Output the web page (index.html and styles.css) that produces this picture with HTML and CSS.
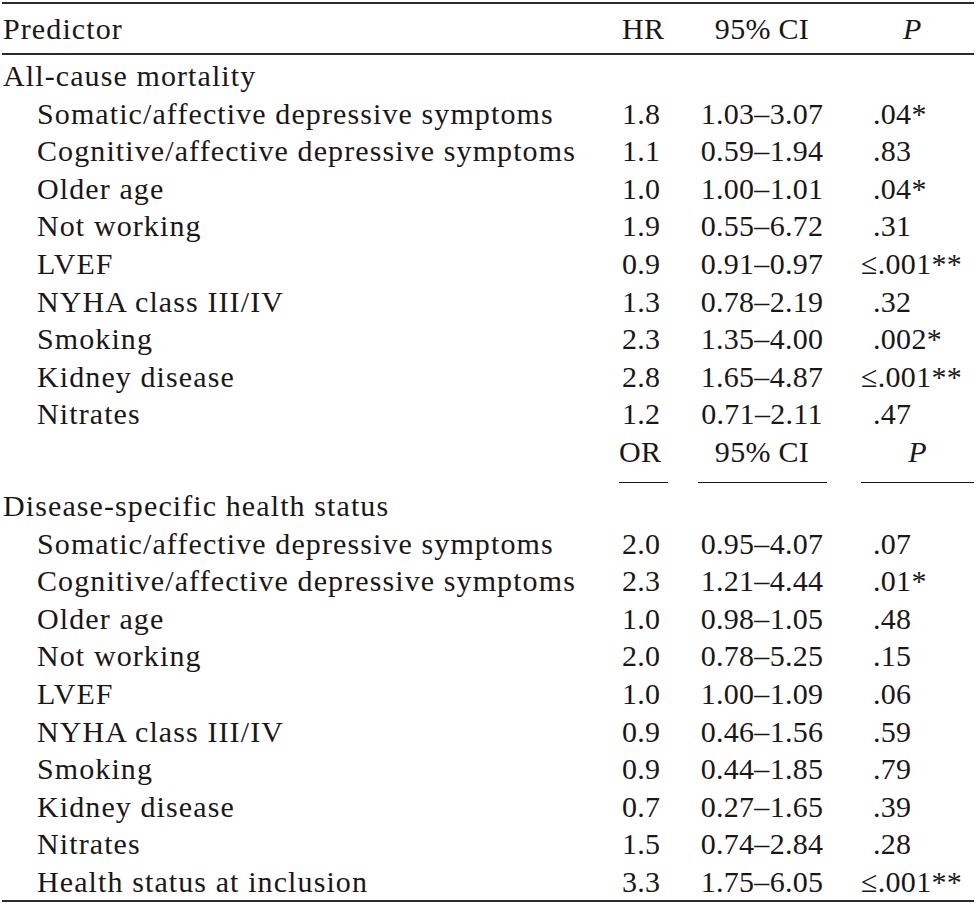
FILE: index.html
```html
<!DOCTYPE html>
<html>
<head>
<meta charset="utf-8">
<link rel="stylesheet" href="styles.css">
</head>
<body>
<table class="tbl">
  <colgroup>
    <col class="c-pred"><col class="c-hr"><col class="c-ci"><col class="c-p">
  </colgroup>
  <thead>
    <tr class="head">
      <th class="pred">Predictor</th>
      <th class="hr">HR</th>
      <th class="ci">95% CI</th>
      <th class="p"><span class="ital">P</span></th>
    </tr>
  </thead>
  <tbody>
    <tr class="group first"><td class="pred">All-cause mortality</td><td></td><td></td><td></td></tr>
    <tr><td class="pred ind">Somatic/affective depressive symptoms</td><td class="hr">1.8</td><td class="ci">1.03–3.07</td><td class="p">.04*</td></tr>
    <tr><td class="pred ind">Cognitive/affective depressive symptoms</td><td class="hr">1.1</td><td class="ci">0.59–1.94</td><td class="p">.83</td></tr>
    <tr><td class="pred ind">Older age</td><td class="hr">1.0</td><td class="ci">1.00–1.01</td><td class="p">.04*</td></tr>
    <tr><td class="pred ind">Not working</td><td class="hr">1.9</td><td class="ci">0.55–6.72</td><td class="p">.31</td></tr>
    <tr><td class="pred ind">LVEF</td><td class="hr">0.9</td><td class="ci">0.91–0.97</td><td class="p"><span class="le">≤</span>.001**</td></tr>
    <tr><td class="pred ind">NYHA class III/IV</td><td class="hr">1.3</td><td class="ci">0.78–2.19</td><td class="p">.32</td></tr>
    <tr><td class="pred ind">Smoking</td><td class="hr">2.3</td><td class="ci">1.35–4.00</td><td class="p">.002*</td></tr>
    <tr><td class="pred ind">Kidney disease</td><td class="hr">2.8</td><td class="ci">1.65–4.87</td><td class="p"><span class="le">≤</span>.001**</td></tr>
    <tr><td class="pred ind">Nitrates</td><td class="hr">1.2</td><td class="ci">0.71–2.11</td><td class="p">.47</td></tr>
    <tr class="subhead">
      <td class="pred"></td>
      <td class="hr"><span class="ul ul-or">OR</span></td>
      <td class="ci"><span class="ul ul-ci">95% CI</span></td>
      <td class="p"><span class="ul ul-p"><span class="ital">P</span></span></td>
    </tr>
    <tr class="group"><td class="pred">Disease-specific health status</td><td></td><td></td><td></td></tr>
    <tr><td class="pred ind">Somatic/affective depressive symptoms</td><td class="hr">2.0</td><td class="ci">0.95–4.07</td><td class="p">.07</td></tr>
    <tr><td class="pred ind">Cognitive/affective depressive symptoms</td><td class="hr">2.3</td><td class="ci">1.21–4.44</td><td class="p">.01*</td></tr>
    <tr><td class="pred ind">Older age</td><td class="hr">1.0</td><td class="ci">0.98–1.05</td><td class="p">.48</td></tr>
    <tr><td class="pred ind">Not working</td><td class="hr">2.0</td><td class="ci">0.78–5.25</td><td class="p">.15</td></tr>
    <tr><td class="pred ind">LVEF</td><td class="hr">1.0</td><td class="ci">1.00–1.09</td><td class="p">.06</td></tr>
    <tr><td class="pred ind">NYHA class III/IV</td><td class="hr">0.9</td><td class="ci">0.46–1.56</td><td class="p">.59</td></tr>
    <tr><td class="pred ind">Smoking</td><td class="hr">0.9</td><td class="ci">0.44–1.85</td><td class="p">.79</td></tr>
    <tr><td class="pred ind">Kidney disease</td><td class="hr">0.7</td><td class="ci">0.27–1.65</td><td class="p">.39</td></tr>
    <tr><td class="pred ind">Nitrates</td><td class="hr">1.5</td><td class="ci">0.74–2.84</td><td class="p">.28</td></tr>
    <tr class="last"><td class="pred ind">Health status at inclusion</td><td class="hr">3.3</td><td class="ci">1.75–6.05</td><td class="p"><span class="le">≤</span>.001**</td></tr>
  </tbody>
</table>
</body>
</html>
```
FILE: styles.css
```css
html, body {
  margin: 0;
  padding: 0;
  background: #ffffff;
}
body {
  padding: 2px 2px 0 2px;
  font-family: "Liberation Serif", "Times New Roman", serif;
  font-size: 30px;
  color: #1a1718;
}
.tbl {
  width: 972px;
  border-collapse: collapse;
  table-layout: fixed;
  border-top: 2px solid #2a2a2a;
  border-bottom: 2px solid #2a2a2a;
}
.c-pred { width: 608px; }
.c-hr { width: 70px; }
.c-ci { width: 170px; }
.c-p { width: 124px; }

th, td {
  padding: 0;
  font-weight: normal;
  text-align: left;
  white-space: nowrap;
  line-height: 37.6px;
  height: 37.6px;
  vertical-align: middle;
  letter-spacing: 0.3px;
}
.head th {
  height: 49px;
  line-height: 49px;
  border-bottom: 2px solid #2a2a2a;
}
.pred { padding-left: 1px; letter-spacing: 1.1px; }
.pred.ind { padding-left: 35px; }
.hr { padding-left: 12px; }
.ci { text-align: center; padding-right: 6px; }
.p { padding-left: 23px; }
.head .p { padding-left: 53px; }
.ital { font-style: italic; }
.le { margin-left: -12px; }
.first td { padding-top: 2px; }
.subhead td {
  height: 54px;
  vertical-align: top;
}
.ul {
  display: inline-block;
  border-bottom: 1.5px solid #1a1718;
  line-height: 37.6px;
  padding-bottom: 11px;
}
.ul-or { margin-left: -3px; padding-right: 3px; padding-left: 0; width: 46px; }
.ul-ci { width: 129px; }
.ul-p { margin-left: -12px; width: 113px; text-align: center; }
```
